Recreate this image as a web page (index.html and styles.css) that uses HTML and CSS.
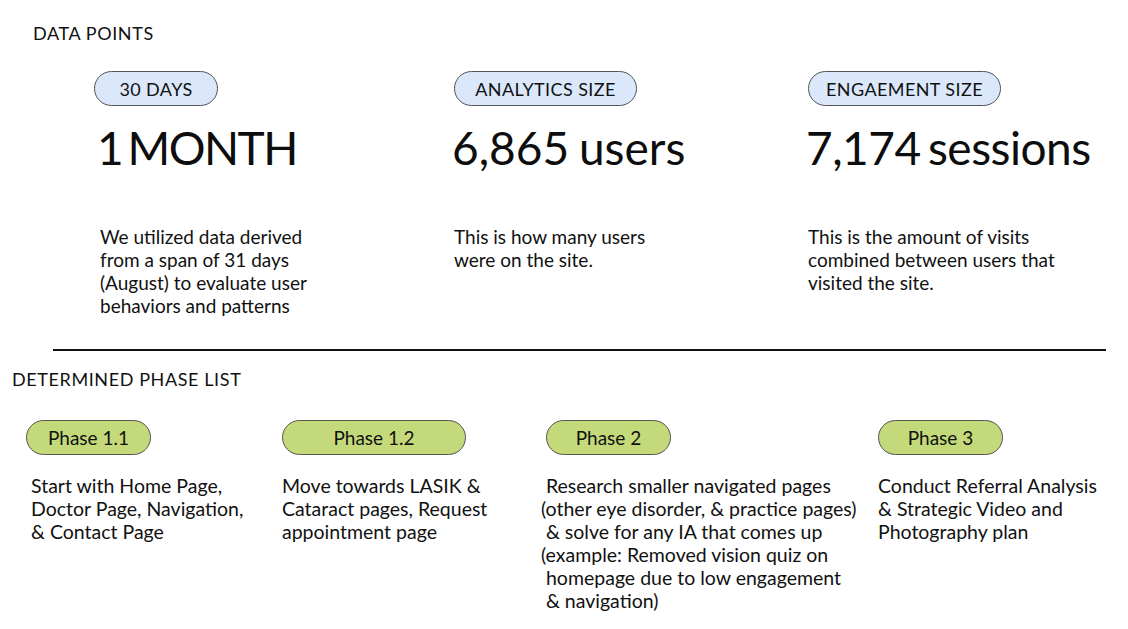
FILE: index.html
```html
<!DOCTYPE html>
<html lang="en">
<head>
<meta charset="utf-8">
<title>Data Points</title>
<link rel="stylesheet" href="styles.css">
</head>
<body>
<main class="page">
  <h2 class="section-title">DATA POINTS</h2>
  <section class="stats">
    <div class="stat stat-first">
      <span class="pill pill-blue pill-w1">30 DAYS</span>
      <p class="big">1 MONTH</p>
      <p class="desc">We utilized data derived<br>from a span of 31 days<br>(August) to evaluate user<br>behaviors and patterns</p>
    </div>
    <div class="stat">
      <span class="pill pill-blue pill-w2">ANALYTICS SIZE</span>
      <p class="big big-users">6,865 users</p>
      <p class="desc">This is how many users<br>were on the site.</p>
    </div>
    <div class="stat">
      <span class="pill pill-blue pill-w3">ENGAEMENT SIZE</span>
      <p class="big">7,174 sessions</p>
      <p class="desc">This is the amount of visits<br>combined between users that<br>visited the site.</p>
    </div>
  </section>
  <hr class="divider">
  <h2 class="section-title section-title-phase">DETERMINED PHASE LIST</h2>
  <section class="phases">
    <div class="phase">
      <span class="pill pill-green pill-p1">Phase 1.1</span>
      <p class="phase-text shift-right">Start with Home Page,<br>Doctor Page, Navigation,<br>&amp; Contact Page</p>
    </div>
    <div class="phase">
      <span class="pill pill-green pill-p2">Phase 1.2</span>
      <p class="phase-text">Move towards LASIK &amp;<br>Cataract pages, Request<br>appointment page</p>
    </div>
    <div class="phase">
      <span class="pill pill-green pill-p3">Phase 2</span>
      <p class="phase-text shift-left"> Research smaller navigated pages<br>(other eye disorder, &amp; practice pages)<br> &amp; solve for any IA that comes up<br>(example: Removed vision quiz on<br> homepage due to low engagement<br> &amp; navigation)</p>
    </div>
    <div class="phase">
      <span class="pill pill-green pill-p4">Phase 3</span>
      <p class="phase-text">Conduct Referral Analysis<br>&amp; Strategic Video and<br>Photography plan</p>
    </div>
  </section>
</main>
</body>
</html>
```

FILE: styles.css
```css
* { box-sizing: border-box; }
html, body {
  margin: 0;
  padding: 0;
  background: #ffffff;
}
body {
  font-family: "Lato", "Liberation Sans", sans-serif;
  color: #111111;
  width: 1128px;
  height: 629px;
  overflow: hidden;
}
.page {
  padding-top: 23px;
}
.section-title {
  margin: 0;
  padding-left: 33px;
  font-size: 18px;
  line-height: 20px;
  font-weight: 400;
  letter-spacing: 0.6px;
  color: #111;
}
.section-title-phase {
  padding-left: 12px;
  margin-top: 18px;
}
.stats {
  display: grid;
  grid-template-columns: 360px 354px 1fr;
  padding-left: 94px;
  margin-top: 28px;
}
.stat {
  display: flex;
  flex-direction: column;
  align-items: flex-start;
}
.pill {
  display: inline-flex;
  align-items: center;
  justify-content: center;
  height: 35px;
  border: 1px solid #555555;
  border-radius: 18px;
  font-size: 18px;
  color: #111;
}
.pill-blue {
  background: #dbe8fb;
  letter-spacing: 0.4px;
}
.pill-green {
  background: #c4d97a;
  font-size: 19px;
}
.pill-w1 { width: 124px; }
.pill-w2 { width: 183px; }
.pill-w3 { width: 193px; }
.pill-p1 { width: 125px; }
.pill-p2 { width: 184px; }
.pill-p3 { width: 125px; }
.pill-p4 { width: 125px; }
.big {
  margin: 19px 0 0 -2px;
  font-size: 46px;
  line-height: 46px;
  font-weight: 400;
  letter-spacing: -0.5px;
  word-spacing: -4px;
  color: #0d0d0d;
  white-space: nowrap;
}
.big-users {
  letter-spacing: 0;
  word-spacing: -2px;
}
.desc {
  margin: 54px 0 0 0;
  font-size: 19px;
  line-height: 23px;
}
.stat-first .big {
  margin-left: 3px;
  letter-spacing: -1.5px;
  word-spacing: -5px;
}
.stat-first .desc { margin-left: 6px; }
.divider {
  margin: 32px 22px 0 53px;
  border: 0;
  height: 2px;
  background: #111;
}
.phases {
  display: grid;
  grid-template-columns: 256px 264px 332px 1fr;
  padding-left: 26px;
  margin-top: 31px;
}
.phase {
  display: flex;
  flex-direction: column;
  align-items: flex-start;
}
.phase-text {
  margin: 19px 0 0 0;
  font-size: 19.5px;
  line-height: 23px;
  white-space: pre;
}
.shift-right { margin-left: 5px; }
.shift-left { margin-left: -5px; }
```
